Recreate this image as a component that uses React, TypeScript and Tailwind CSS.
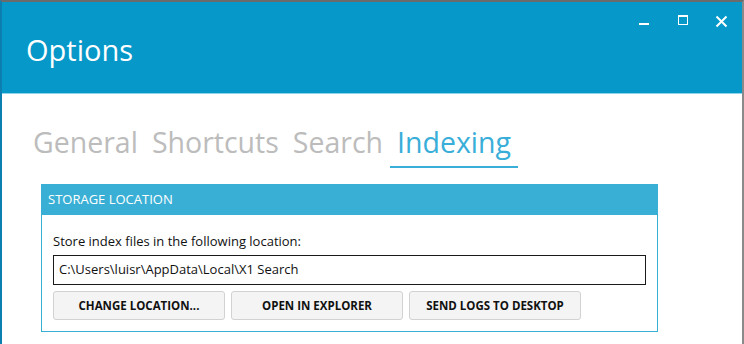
import React from "react";

const font = { fontFamily: '"Open Sans", "Noto Sans", sans-serif' };

function WindowControls() {
  return (
    <div className="flex items-start pt-[12px] pr-[1px]">
      <div className="w-[39px] h-[14px] flex items-center justify-center">
        <svg width="12" height="14" viewBox="0 0 12 14">
          <rect x="1" y="9" width="10" height="2" fill="white" />
        </svg>
      </div>
      <div className="w-[39px] h-[14px] flex items-center justify-center">
        <svg width="12" height="14" viewBox="0 0 12 14">
          <rect x="1.5" y="1.5" width="9" height="9" fill="none" stroke="white" strokeWidth="1" />
          <rect x="1" y="1" width="10" height="2" fill="white" />
        </svg>
      </div>
      <div className="w-[39px] h-[14px] flex items-center justify-center">
        <svg width="13" height="13" viewBox="0 0 13 13">
          <path d="M1.5 1.5 L11.5 11.5 M11.5 1.5 L1.5 11.5" stroke="white" strokeWidth="2" />
        </svg>
      </div>
    </div>
  );
}

const tabs = ["General", "Shortcuts", "Search", "Indexing"];

export default function App() {
  return (
    <div
      className="w-[744px] h-[344px] overflow-hidden bg-white border-t-2 border-t-[#6b6b6b] border-l-2 border-l-[#0a7fb0] border-r-2 border-r-[#8a8a8a] flex flex-col"
      style={font}
    >
      <div className="h-[92px] bg-[#0598c9] border-b border-b-[#8fd3ea] flex justify-between shrink-0">
        <div className="pl-[24px] pt-[28px] text-white text-[29px] leading-[40px]">Options</div>
        <WindowControls />
      </div>

      <div className="flex gap-[14px] pl-[31px] pt-[29px] text-[28.5px] leading-[39px]">
        {tabs.map((t) =>
          t === "Indexing" ? (
            <div key={t} className="text-[#39aed8] border-b-2 border-b-[#39aed8] pb-[4px] px-[7px] -ml-[7px]">
              {t}
            </div>
          ) : (
            <div key={t} className="text-[#bcbcbc] pb-[4px]">
              {t}
            </div>
          )
        )}
      </div>

      <div className="ml-[39px] mt-[16px] w-[617px] h-[148px] border border-[#3aafd5] flex flex-col">
        <div className="h-[30px] bg-[#3aafd5] text-white text-[13px] flex items-center pl-[6px]">
          STORAGE LOCATION
        </div>
        <div className="px-[11px] pt-[17px]">
          <div className="text-[13px] text-[#111] leading-[18px]">Store index files in the following location:</div>
          <div className="mt-[5px] w-[593px] h-[30px] border border-[#1a1a1a] flex items-center pl-[5px] text-[13px] text-[#111]">
            C:\Users\luisr\AppData\Local\X1 Search
          </div>
          <div className="mt-[6px] flex gap-[6px]">
            {["CHANGE LOCATION...", "OPEN IN EXPLORER", "SEND LOGS TO DESKTOP"].map((b) => (
              <div
                key={b}
                className="w-[172px] h-[29px] rounded-[3px] bg-[#f4f4f4] border border-[#d2d2d2] flex items-center justify-center text-[11.5px] font-bold text-[#111]"
              >
                {b}
              </div>
            ))}
          </div>
        </div>
      </div>
    </div>
  );
}
